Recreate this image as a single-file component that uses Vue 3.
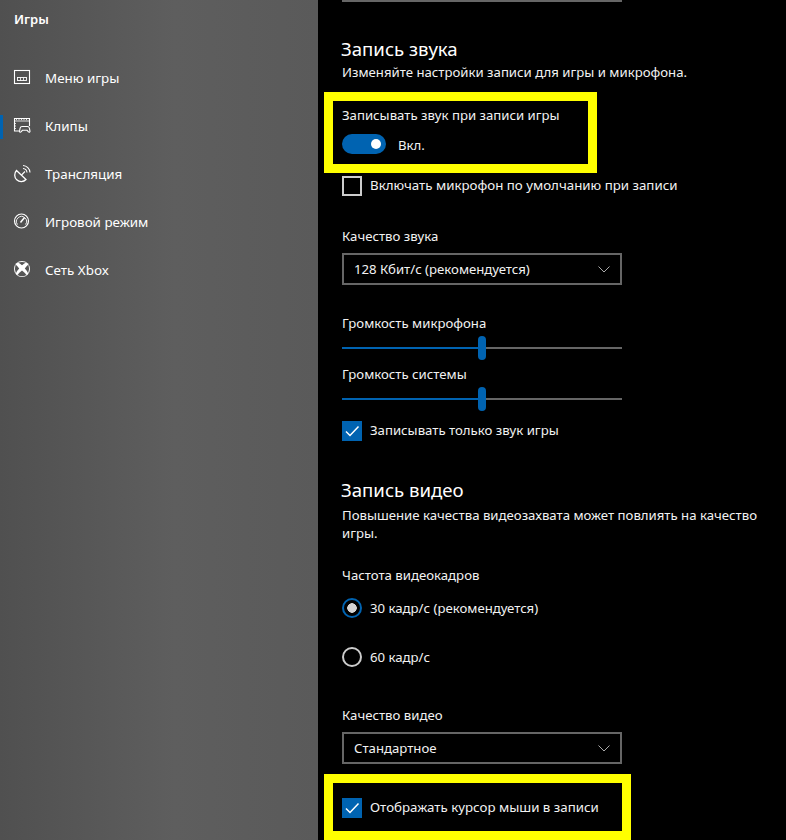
<script setup>
const nav = [
  { label: 'Меню игры', icon: 'menu' },
  { label: 'Клипы', icon: 'clips', active: true },
  { label: 'Трансляция', icon: 'cast' },
  { label: 'Игровой режим', icon: 'mode' },
  { label: 'Сеть Xbox', icon: 'xbox' }
]
</script>

<template>
  <div class="page">
    <aside class="side">
      <div class="side-title">Игры</div>
      <nav class="nav">
        <div v-for="n in nav" :key="n.label" class="nav-item" :class="{ active: n.active }">
          <svg class="nav-icon" viewBox="0 0 20 20" fill="none" stroke="#fff" stroke-width="1.1">
            <template v-if="n.icon === 'menu'">
              <rect x="2.5" y="3.5" width="15" height="13" />
              <rect x="5.5" y="10.5" width="9" height="3" stroke-width="0.9" />
              <path d="M8.5 10.5v3M11.5 10.5v3" stroke-width="0.8" />
            </template>
            <template v-else-if="n.icon === 'clips'">
              <path d="M7 16H2.5V3.5h15V11" />
              <path d="M4.5 3.5v1.6M7 3.5v1.6M9.5 3.5v1.6M12 3.5v1.6M14.5 3.5v1.6M2.5 6h15M2.5 8.5h1.5M2.5 11h1.5M2.5 13.5h1.5" stroke-width="0.8" />
              <path d="M10 11.5h5.5c1 0 1.6.6 1.9 1.6l.6 3.2c.1.8-.9 1.2-1.5.6l-1.4-1.6H10.400l-1.400 1.600c-.6.6-1.600.2-1.500-.6l.6-3.200c.3-1 1-1.600 1.900-1.600z" />
            </template>
            <template v-else-if="n.icon === 'cast'">
              <path d="M4.500 7.500 14 16.500a6.400 6.400 0 0 1-9.500-9z" stroke-width="1.300" />
              <path d="M9.500 12 13 8.500" />
              <path d="M11 5.500a4.500 4.500 0 0 1 4 4M11 2.500a7.500 7.500 0 0 1 7 7" />
            </template>
            <template v-else-if="n.icon === 'mode'">
              <circle cx="9.500" cy="10" r="7" stroke-width="1.200" />
              <path d="M5.500 13.500a5 5 0 1 1 8 0" stroke-width="0.900" />
              <path d="M8.500 11.500 12.500 6.500" stroke-width="1.500" />
            </template>
            <template v-else>
              <circle cx="10" cy="10" r="8" fill="#fff" stroke="none" />
              <g fill="#555" stroke="none">
                <path d="M6 3.600Q10 2.200 14 3.600 11.800 4.600 10 6.200 8.200 4.600 6 3.600z" />
                <path d="M3.600 5.400Q2 10 3.900 14.200 5.200 11.600 7.200 9.600 5.400 7 3.600 5.400z" />
                <path d="M16.400 5.400Q18 10 16.100 14.200 14.800 11.600 12.800 9.600 14.600 7 16.400 5.400z" />
                <path d="M10 11.600Q7.400 13.600 5.500 16 10 18.700 14.500 16 12.600 13.600 10 11.600z" />
              </g>
            </template>
          </svg>
          <span>{{ n.label }}</span>
        </div>
      </nav>
    </aside>

    <main class="main">
      <div class="top-line"></div>

      <h2 class="heading first">Запись звука</h2>
      <p class="desc">Изменяйте настройки записи для игры и микрофона.</p>

      <div class="mark mark-audio">
        <div class="label">Записывать звук при записи игры</div>
        <div class="toggle-row">
          <span class="toggle"><i></i></span>
          <span class="toggle-text">Вкл.</span>
        </div>
      </div>

      <label class="check-row mic">
        <span class="box"></span>
        <span>Включать микрофон по умолчанию при записи</span>
      </label>

      <div class="label field-label q-audio">Качество звука</div>
      <div class="select">
        <span>128 Кбит/с (рекомендуется)</span>
        <svg class="chev" viewBox="0 0 12 7" fill="none" stroke="#aaa" stroke-width="1"><path d="M.5.500 6 6l5.500-5.500" /></svg>
      </div>

      <div class="label vol-mic">Громкость микрофона</div>
      <div class="slider"><b></b><i></i></div>
      <div class="label vol-sys">Громкость системы</div>
      <div class="slider"><b></b><i></i></div>

      <label class="check-row only">
        <span class="box on">
          <svg viewBox="0 0 20 20" fill="none" stroke="#fff" stroke-width="1.500"><path d="M4 10.500 8 14.500 16.500 5.500" /></svg>
        </span>
        <span>Записывать только звук игры</span>
      </label>

      <h2 class="heading second">Запись видео</h2>
      <p class="desc wrap">Повышение качества видеозахвата может повлиять на качество игры.</p>

      <div class="label fps">Частота видеокадров</div>
      <div class="radio-row r30"><span class="radio on"></span><span>30 кадр/с (рекомендуется)</span></div>
      <div class="radio-row r60"><span class="radio"></span><span>60 кадр/с</span></div>

      <div class="label q-video">Качество видео</div>
      <div class="select">
        <span>Стандартное</span>
        <svg class="chev" viewBox="0 0 12 7" fill="none" stroke="#aaa" stroke-width="1"><path d="M.5.500 6 6l5.500-5.500" /></svg>
      </div>

      <div class="mark mark-cursor">
        <label class="check-row">
          <span class="box on">
            <svg viewBox="0 0 20 20" fill="none" stroke="#fff" stroke-width="1.500"><path d="M4 10.500 8 14.500 16.500 5.500" /></svg>
          </span>
          <span>Отображать курсор мыши в записи</span>
        </label>
      </div>
    </main>
  </div>
</template>

<style>
html, body { margin: 0; background: #000; }
</style>

<style scoped>
.page {
  display: flex;
  width: 786px;
  height: 840px;
  overflow: hidden;
  background: #000;
  color: #f2f2f2;
  font-family: "Noto Sans", "Open Sans", sans-serif;
  font-size: 13.2px;
  line-height: 18px;
}
.side {
  width: 318px;
  flex: none;
  color: #fff;
  background: linear-gradient(90deg, #505050 0, #5e5e5e 55%, #5a5a5a 100%);
}
.side-title {
  margin: 10px 0 0 14px;
  font-weight: 600;
  font-size: 13px;
}
.nav { margin-top: 26px; display: flex; flex-direction: column; }
.nav-item {
  position: relative;
  display: flex;
  align-items: center;
  height: 48px;
  padding-left: 12px;
  gap: 13px;
  font-size: 13.4px;
}
.nav-item.active::before {
  content: "";
  position: absolute;
  left: 0;
  top: 13px;
  width: 3px;
  height: 24px;
  background: #0063b1;
}
.nav-icon { width: 20px; height: 20px; flex: none; margin-top: -2px; }

.main { flex: 1; padding-left: 24px; min-width: 0; }
.top-line { width: 280px; height: 2px; background: #666; }
.heading {
  margin: 0 0 0 -1px;
  font-weight: 400;
  font-size: 18.6px;
  line-height: 24px;
  color: #fff;
}
.heading.first { margin-top: 35px; }
.heading.second { margin-top: 37px; }
.desc { margin: 2px 0 0; width: 430px; }
.desc.wrap { margin-top: 4px; }
.label { color: #f2f2f2; }

.mark {
  border: 9px solid #ff0;
  margin-left: -18px;
  padding-left: 9px;
  box-sizing: border-box;
}
.mark-audio {
  margin-top: 11px;
  width: 273px;
  height: 81px;
  padding-top: 5px;
}
.toggle-row {
  display: flex;
  align-items: center;
  gap: 12px;
  margin-top: 10px;
  height: 20px;
}
.toggle-text { position: relative; top: 1px; }
.toggle {
  position: relative;
  width: 44px;
  height: 20px;
  border-radius: 10px;
  background: #0063b1;
}
.toggle i {
  position: absolute;
  right: 5px;
  top: 5px;
  width: 10px;
  height: 10px;
  border-radius: 50%;
  background: #fff;
}

.check-row { display: flex; align-items: center; gap: 8px; height: 20px; line-height: 18px; font-size: 13.3px; }
.check-row > span:last-child { margin-top: -3px; }
.check-row.mic { margin-top: 3px; }
.check-row.only { margin-top: 21px; font-size: 13.2px; }
.box {
  box-sizing: border-box;
  width: 20px;
  height: 20px;
  flex: none;
  border: 2px solid #ccc;
}
.box.on { border: 0; background: #0063b1; }
.box svg { display: block; width: 20px; height: 20px; }

.q-audio { margin-top: 31px; }
.q-video { margin-top: 39px; }
.select {
  box-sizing: border-box;
  display: flex;
  align-items: center;
  justify-content: space-between;
  width: 280px;
  height: 32px;
  margin-top: 8px;
  padding: 0 10px;
  border: 2px solid #666;
}
.chev { width: 12px; height: 7px; }

.vol-mic { margin-top: 29px; }
.vol-sys { margin-top: 16px; }
.slider {
  position: relative;
  width: 280px;
  height: 2px;
  margin-top: 15px;
  background: #666;
}
.slider b {
  position: absolute;
  left: 0;
  top: 0;
  width: 140px;
  height: 2px;
  background: #0063b1;
}
.slider i {
  position: absolute;
  left: 136px;
  top: -11px;
  width: 8px;
  height: 24px;
  border-radius: 4px;
  background: #0063b1;
}

.fps { margin-top: 24px; }
.radio-row { display: flex; align-items: center; gap: 8px; height: 20px; }
.r30 { margin-top: 14px; }
.r60 { margin-top: 29px; }
.radio {
  box-sizing: border-box;
  width: 20px;
  height: 20px;
  flex: none;
  border: 2px solid #ccc;
  border-radius: 50%;
}
.radio.on {
  border-color: #0063b1;
  background: radial-gradient(circle, #d4d4d4 0 4.500px, transparent 5px);
}

.mark-cursor {
  margin-top: 10px;
  width: 307px;
  height: 66px;
  padding-top: 15px;
}
</style>
